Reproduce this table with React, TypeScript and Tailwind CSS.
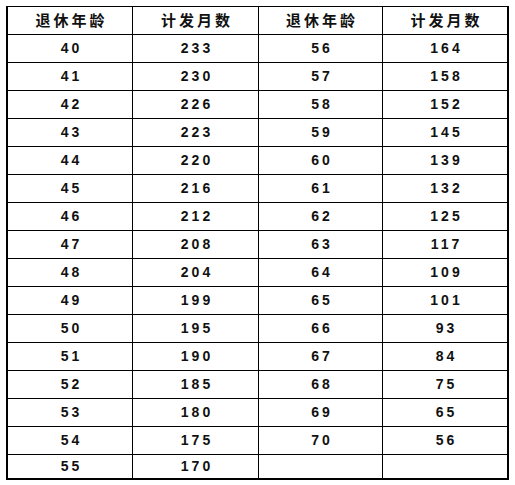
const rows: [string, string, string, string][] = [
  ["40", "233", "56", "164"],
  ["41", "230", "57", "158"],
  ["42", "226", "58", "152"],
  ["43", "223", "59", "145"],
  ["44", "220", "60", "139"],
  ["45", "216", "61", "132"],
  ["46", "212", "62", "125"],
  ["47", "208", "63", "117"],
  ["48", "204", "64", "109"],
  ["49", "199", "65", "101"],
  ["50", "195", "66", "93"],
  ["51", "190", "67", "84"],
  ["52", "185", "68", "75"],
  ["53", "180", "69", "65"],
  ["54", "175", "70", "56"],
  ["55", "170", "", ""],
]

const headers = ["退休年龄", "计发月数", "退休年龄", "计发月数"]

export default function App() {
  return (
    <div className="w-[515px] h-[485px] bg-white pl-[6px] pt-[6px]">
      <div className="grid w-fit grid-cols-[125px_126px_124px_126px] border-l-2 border-t border-black text-[#111]">
        {headers.map((h, i) => (
          <div
            key={i}
            className={
              "flex h-[28px] items-center justify-center border-b border-black pl-[3px] text-[15px] font-bold tracking-[3px] " +
              (i === 3 ? "border-r-2" : "border-r")
            }
            style={{ fontFamily: '"Noto Sans CJK SC", sans-serif' }}
          >
            {h}
          </div>
        ))}
        {rows.map((r, ri) =>
          r.map((v, ci) => (
            <div
              key={ri + "-" + ci}
              className={
                "flex items-center justify-center border-b border-black pl-[3px] font-['Liberation_Sans',sans-serif] text-[14px] font-bold tracking-[3px] " +
                (ri === rows.length - 1 ? "h-[25px] border-b-2" : "h-[28px]") +
                (ci === 3 ? " border-r-2" : " border-r")
              }
            >
              {v}
            </div>
          ))
        )}
      </div>
    </div>
  )
}
